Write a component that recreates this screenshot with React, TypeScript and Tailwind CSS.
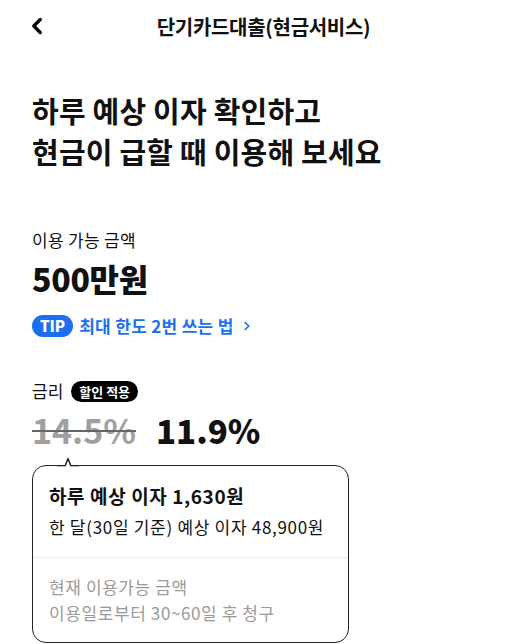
import { ChevronLeft, ChevronRight } from "lucide-react";

const font = { fontFamily: '"Noto Sans CJK KR", "Noto Sans", sans-serif' };

export default function App() {
  return (
    <div className="h-[644px] w-[527px] overflow-hidden bg-white text-[#111]" style={font}>
      {/* header */}
      <div className="relative flex h-[54px] items-center justify-center">
        <button className="absolute left-[24px] top-[13px] text-black">
          <ChevronLeft size={26} strokeWidth={3} />
        </button>
        <h1 className="text-[20px] font-bold tracking-[-0.3px]">단기카드대출(현금서비스)</h1>
      </div>

      <div className="px-8">
        <p className="mt-[36px] text-[29px] font-bold leading-[41px] tracking-[0.2px]">
          하루 예상 이자 확인하고
          <br />
          현금이 급할 때 이용해 보세요
        </p>

        <p className="mt-[56px] text-[17px] leading-[24px] tracking-[0.3px]">이용 가능 금액</p>
        <p className="mt-[7px] text-[32px] font-black leading-[38px] tracking-[-0.3px]">500만원</p>

        <div className="mt-[17px] flex h-[24px] items-center gap-[6px]">
          <span className="rounded-full bg-[#1b6ff0] px-[8px] text-[15px] font-black leading-[22px] text-white">
            TIP
          </span>
          <span className="text-[17px] font-semibold tracking-[0.3px] text-[#1b6ff0]">최대 한도 2번 쓰는 법</span>
          <ChevronRight size={14} strokeWidth={3} className="text-[#1b6ff0]" />
        </div>

        <div className="mt-[41px] flex h-[24px] items-center gap-[8px]">
          <span className="text-[17px]">금리</span>
          <span className="rounded-full bg-black px-[8px] text-[13px] font-bold leading-[21px] text-white">
            할인 적용
          </span>
        </div>

        <div className="mt-[6px] flex items-baseline gap-[20px]">
          <span className="text-[34px] font-bold leading-[42px] text-[#a0a0a0] line-through decoration-[#666] decoration-2">
            14.5%
          </span>
          <span className="text-[33px] font-black leading-[42px]">11.9%</span>
        </div>

        {/* bubble card */}
        <div className="relative mt-[14px] w-[317px] rounded-[14px] border-[1.5px] border-[#222]">
          <svg
            className="absolute -top-[9px] left-[24px]"
            width="22"
            height="10"
            viewBox="0 0 22 10"
          >
            <path d="M0 9.2 L8 9.2 L11 1.5 L14 9.2 L22 9.2" fill="white" stroke="#222" strokeWidth="1.5" strokeLinejoin="round" />
            <rect x="0" y="9.3" width="22" height="2" fill="white" />
          </svg>
          <div className="px-[16px] pt-[16px] pb-[17px]">
            <p className="text-[19px] font-bold leading-[28px] tracking-[0.6px]">하루 예상 이자 1,630원</p>
            <p className="mt-[4px] text-[17px] leading-[26px] tracking-[0.7px]">한 달(30일 기준) 예상 이자 48,900원</p>
          </div>
          <div className="h-px bg-[#ececec]" />
          <div className="px-[16px] pt-[16px] pb-[16px] text-[17px] leading-[26px] tracking-[0.6px] text-[#9a9a9a]">
            <p>현재 이용가능 금액</p>
            <p>이용일로부터 30~60일 후 청구</p>
          </div>
        </div>
      </div>
    </div>
  );
}
